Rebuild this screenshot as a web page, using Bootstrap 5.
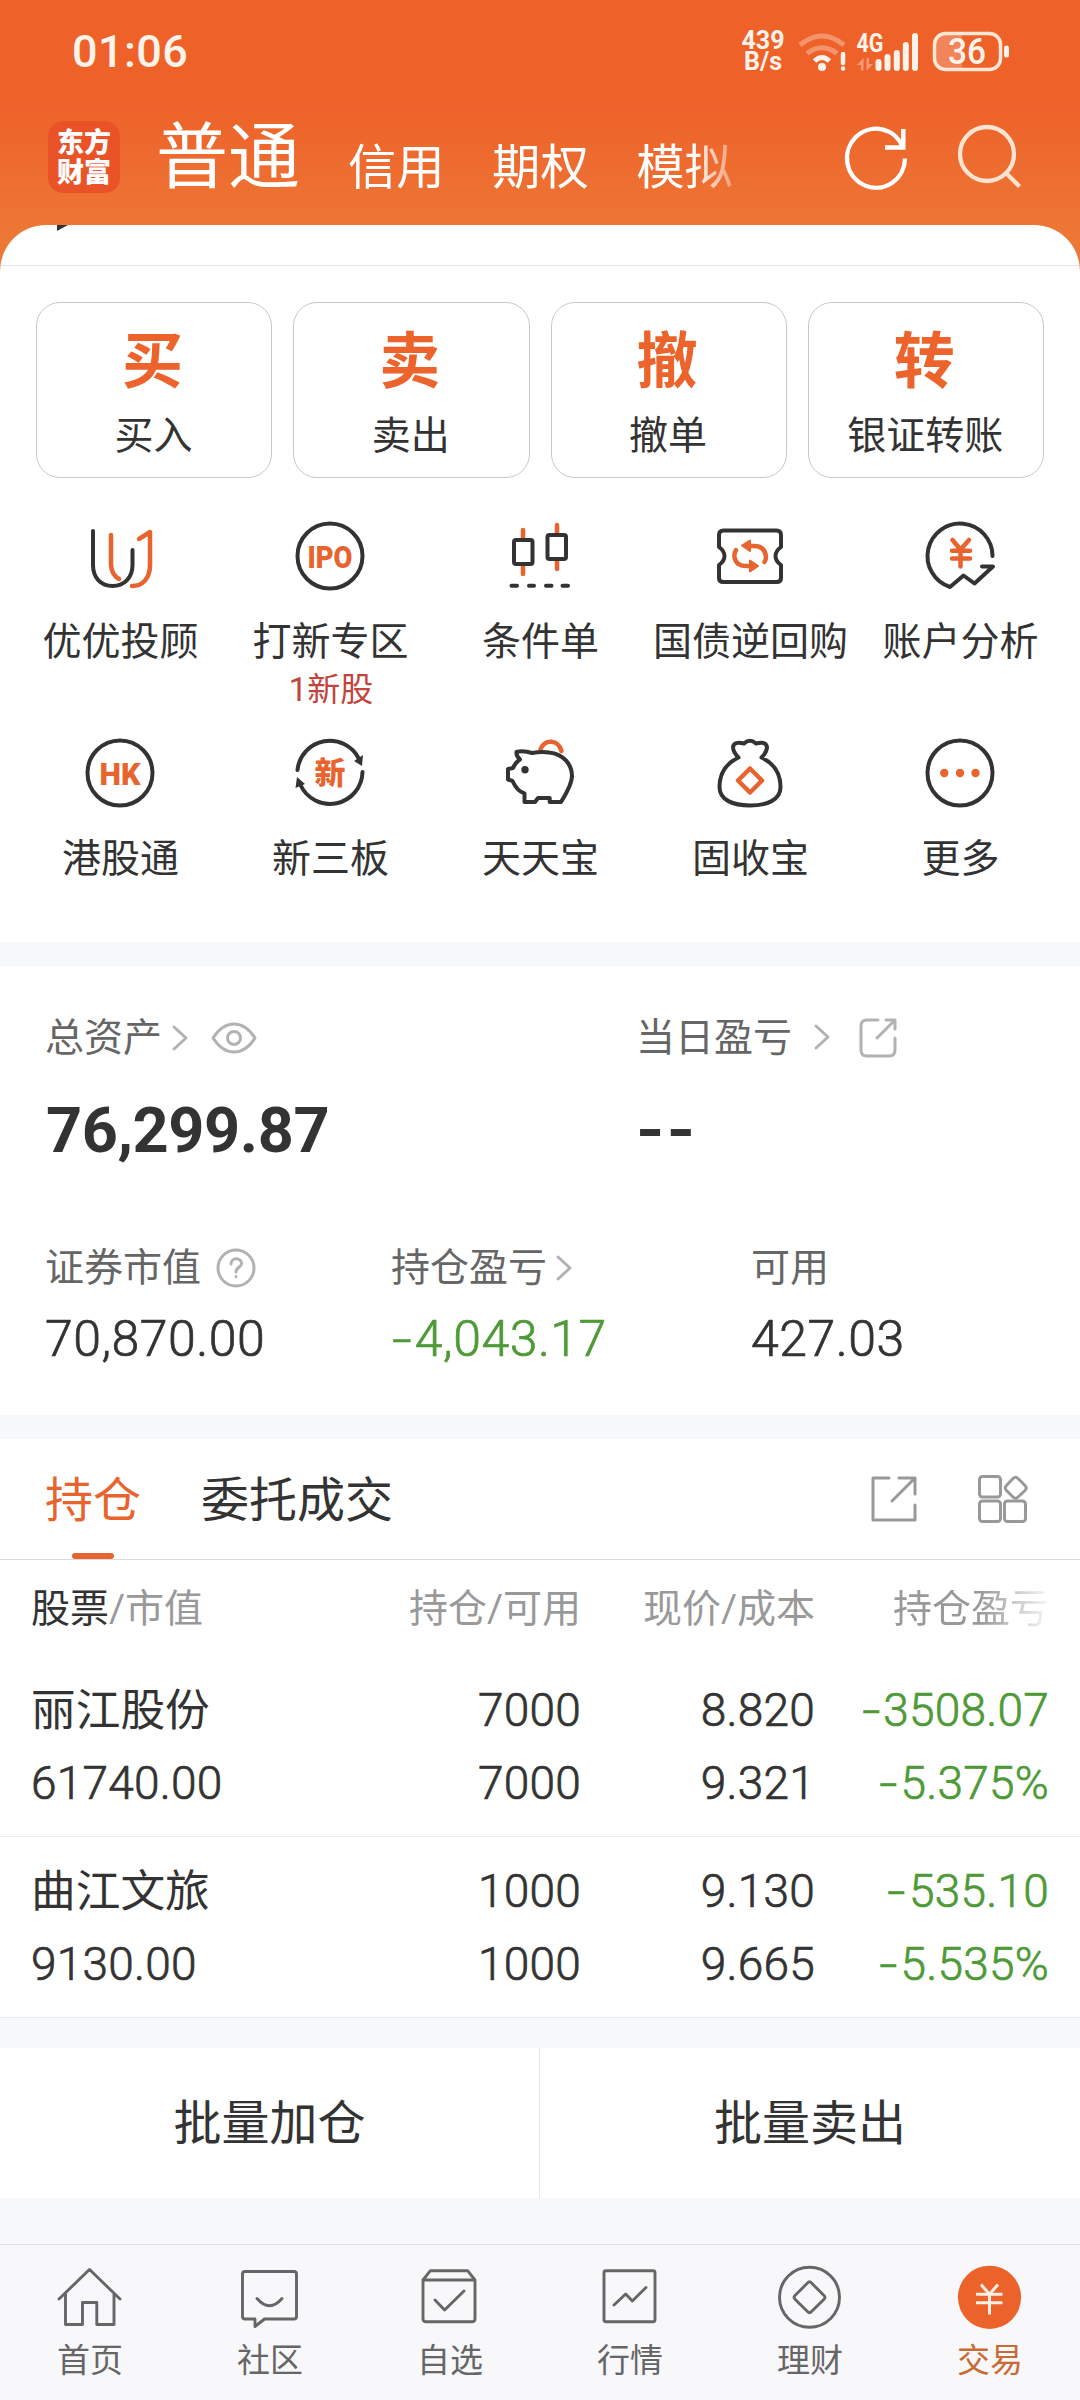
<!DOCTYPE html>
<html lang="zh-CN">
<head>
<meta charset="utf-8">
<meta name="viewport" content="width=device-width, initial-scale=1">
<title>交易</title>
<link href="https://cdn.jsdelivr.net/npm/bootstrap@5.3.0/dist/css/bootstrap.min.css" rel="stylesheet">
<style>
  :root { --org: #e8642e; --ink: #333; --sub: #666; --band: #f7f8fa; }
  body { width: 1080px; height: 2400px; margin: 0; overflow: hidden; background: #fff; color: var(--ink);
         font-family: Roboto, "Noto Sans CJK SC", sans-serif; font-size: 39px; line-height: 1; }
  svg { display: block; flex: none; fill: none; overflow: visible; stroke-linecap: round; stroke-linejoin: round; }
  svg text { stroke: none; }
  .top-area { height: 272px; background: linear-gradient(#ee622a 0, #ee622a 105px, #ed7735 235px); color: #fff; }
  .status { height: 103px; padding: 0 69px 0 72px; color: #fff3ea; }
  .clock { font-size: 45px; font-weight: 500; letter-spacing: .4px; }
  .speed { font-size: 25px; font-weight: 700; line-height: 20.5px; width: 46px; }
  .title-bar { height: 122px; padding-left: 48px; }
  .brand { width: 72px; height: 72px; border-radius: 15px; background: #ea5328; font: 900 27px/30px "Noto Sans CJK SC", sans-serif; padding-top: 5px; margin-top: 18px; }
  .now-tab { font-size: 72px; width: 192px; margin-left: 36px; padding-top: 19px; }
  .tabs-more { font-size: 48.3px; gap: 47.5px; width: 492px; padding-top: 9px;
     -webkit-mask-image: linear-gradient(90deg, #000 345px, transparent 405px); mask-image: linear-gradient(90deg, #000 345px, transparent 405px); }
  .sheet { margin-top: -47px; border-radius: 46px 46px 0 0; background: #fff; height: 717px; overflow: hidden; }
  .peek { height: 41px; border-bottom: 1px solid #e4e4e4; padding-left: 57px; }
  .quick { padding: 36px 36px 0; gap: 21px; }
  .quick > div { flex: 1 1 0; height: 176px; border: 1px solid #c9c9c9; border-radius: 24px; padding-right: 1px; }
  .quick b { font-size: 61px; font-weight: 700; color: #ec632b; height: 61px; margin: 29px 2px 0 0; }
  .quick span { margin-top: 24px; }
  .grid5 { padding: 0 15px; height: 217px; }
  .grid5 > div { flex: 1 1 0; white-space: nowrap; }
  .grid5 .cap-text { margin-top: 32px; padding-left: 1px; }
  .grid5 .hint { font-size: 33px; color: #c2443c; margin-top: 11px; padding-left: 2px; }
  .d { stroke: var(--ink); stroke-width: 4; }
  .o { stroke: var(--org); stroke-width: 4.5; }
  .of { fill: var(--org); }
  .strip { height: 24px; background: var(--band); }
  .assets { height: 449px; color: var(--sub); }
  .lbl { height: 40px; }
  .fig { color: var(--ink); font-weight: 300; font-size: 50px; -webkit-text-stroke: .7px; letter-spacing: .5px; margin-top: 26px; }
  .big { color: var(--ink); font-weight: 700; font-size: 63px; letter-spacing: -.4px; padding: 41px 0 0 1px; }
  .g { stroke: #b2b2b2; stroke-width: 3; }
  .green { color: #4f9a38; }
  .dash { display: inline-block; transform: scaleX(1.4); margin-right: 5px; margin-left: 4px; }
  .none2 { display: inline-block; transform: scaleX(1.15); transform-origin: 0 50%; letter-spacing: 2px; margin-left: -1px; }
  .seg { height: 121px; border-bottom: 1px solid #dcdcdc; font-size: 48px; padding: 0 52px 0 45px; }
  .seg span { padding-top: 4px; }
  .on { color: var(--org); position: relative; }
  .on::after { content: ""; position: absolute; left: 27px; bottom: -34px; width: 42px; height: 6px; border-radius: 3px; background: var(--org); }
  .h2l { stroke: #999; stroke-width: 3; }
  .cols { display: grid; grid-template-columns: 300px 250px 234px 234px; padding: 0 0 0 31px; text-align: right; white-space: nowrap; align-items: center; }
  .cols > :nth-child(4n+1) { text-align: left; }
  .heads { height: 98px; color: #999; }
  .fade-r { -webkit-mask-image: linear-gradient(90deg, #000 165px, transparent 240px); mask-image: linear-gradient(90deg, #000 165px, transparent 240px); }
  .hold { height: 179px; font-size: 46px; font-weight: 300; grid-template-rows: 73px 73px; align-content: start; padding-top: 15px; -webkit-text-stroke: .7px; letter-spacing: .25px; }
  .hold .nm { font-size: 44.7px; font-weight: 400; -webkit-text-stroke: 0; letter-spacing: 0; padding-top: 3px; }
  .rule { border-bottom: 1px solid #ececec; }
  .batch { background: var(--band); padding: 30px 0 46px; height: 226px; font-size: 48px; }
  .batch > div { height: 150px; background: #fff; padding-top: 2px; }
  .batch > div + div { border-left: 1px solid #e8e8ea; }
  .dock { height: 157px; border-top: 1px solid #dfe0e3; background: #f8f8fa; font-size: 33px; color: var(--sub); }
  .dock > div { flex: 1 1 0; padding-top: 20px; gap: 15px; }
  .k { stroke: #666; stroke-width: 2.9; }
</style>
<script src="https://cdn.jsdelivr.net/npm/bootstrap@5.3.0/dist/js/bootstrap.bundle.min.js"></script>
</head>
<body>
<header class="top-area">
  <div class="status d-flex justify-content-between align-items-center">
    <span class="clock">01:06</span>
    <div class="d-flex align-items-center">
      <div class="speed text-center">439<br>B/s</div>
      <svg width="225" height="40" viewBox="0 0 225 40">
        <g transform="translate(-786 -31)">
          <g stroke="#fff3ea" stroke-width="5" stroke-linecap="butt">
            <path d="M800 44Q822 26 844 44" opacity=".35"/>
            <path d="M807 52.500Q822 41 837 52.500" opacity=".35"/>
            <path d="M814.500 60Q822 53 829.500 60"/>
          </g>
          <circle cx="822" cy="66" r="4" fill="#fff3ea"/>
          <path d="M843 53V62M843 67.500V67.600" stroke="#fff3ea" stroke-width="4.500"/>
          <text x="856.500" y="50.500" font-size="25" font-weight="700" fill="#fff3ea" textLength="27" lengthAdjust="spacingAndGlyphs">4G</text>
          <path d="M857 64L863.500 57V69.500H861V64ZM873 63L866.500 69.500V57H869V63Z" fill="#f59a74"/>
          <path d="M878.500 61V67M887.500 56V67M896.800 52V67M905.800 44V67M915 35V67" stroke="#fff3ea" stroke-width="6"/>
          <path d="M962 33H947Q935 33 935 45V56Q935 68 947 68H962Z" fill="#fff" opacity=".22"/>
          <rect x="934.500" y="32.500" width="66" height="36" rx="11" stroke="#ffe7d8" stroke-width="3.500"/>
          <path d="M1006.500 47V54" stroke="#fff3ea" stroke-width="5"/>
          <text x="967" y="63" text-anchor="middle" font-size="36" font-weight="500" fill="#fff3ea" textLength="38" lengthAdjust="spacingAndGlyphs">36</text>
        </g>
      </svg>
    </div>
  </div>
  <div class="title-bar d-flex align-items-start">
    <div class="brand text-center">东方<br>财富</div>
    <div class="now-tab text-nowrap">普通</div>
    <div class="tabs-more d-flex text-nowrap align-self-center"><span>信用</span><span>期权</span><span>模拟</span></div>
    <svg width="200" height="80" viewBox="840 119 200 80" class="mt-3">
      <path d="M903 147.500A29 29.500 0 1 0 905 158.500" stroke="#fff" stroke-width="4.300" stroke-linecap="butt"/>
      <path d="M903.300 129V147.500H885" stroke="#fff" stroke-width="4.500" stroke-linecap="butt" stroke-linejoin="miter"/>
      <g stroke="#ffe4d2" stroke-width="4.300" stroke-linecap="butt"><ellipse cx="987" cy="154" rx="27" ry="27"/><path d="M1006 173L1019.500 186.500"/></g>
    </svg>
  </div>
</header>

<main>
<section class="sheet position-relative">
  <div class="peek"><svg width="12" height="7"><path d="M0 0H11L0 6Z" fill="#333"/></svg></div>
  <div class="quick d-flex">
    <div class="d-flex flex-column align-items-center"><b>买</b><span>买入</span></div>
    <div class="d-flex flex-column align-items-center"><b>卖</b><span>卖出</span></div>
    <div class="d-flex flex-column align-items-center"><b>撤</b><span>撤单</span></div>
    <div class="d-flex flex-column align-items-center"><b>转</b><span>银证转账</span></div>
  </div>
  <div class="grid5 d-flex" style="margin-top:43px">
    <div class="d-flex flex-column align-items-center">
      <svg width="70" height="70"><path class="d" d="M8 10V44C8 57 16 65 27.500 65S47.500 57 47.500 44V29"/><path class="o" d="M26 14V43C26 50 29 55 34 58M54 18L65 11V44C65 57 58 65 47 65"/></svg>
      <span class="cap-text">优优投顾</span>
    </div>
    <div class="d-flex flex-column align-items-center">
      <svg width="70" height="70"><circle class="d" cx="35" cy="35" r="32.500"/><text class="of" x="12.500" y="46.500" font-size="32" font-weight="900" textLength="45" lengthAdjust="spacingAndGlyphs">IPO</text></svg>
      <span class="cap-text">打新专区</span><span class="hint">1新股</span>
    </div>
    <div class="d-flex flex-column align-items-center">
      <svg width="70" height="70"><path class="o" d="M18 9V17M18 45V53M52 4V12M52 40V48"/><rect class="d" x="9" y="19" width="18.500" height="24" rx="2"/><rect class="d" x="42.500" y="14" width="18.500" height="24" rx="2"/><path class="d" d="M6.500 64.700H12M24 64.700H29M41 64.700H46.500M57.500 64.700H63"/></svg>
      <span class="cap-text">条件单</span>
    </div>
    <div class="d-flex flex-column align-items-center">
      <svg width="70" height="70"><path class="d" d="M4 14Q4 9.500 8.500 9.500H61.500Q66 9.500 66 14V26Q60.500 30 60.500 35T66 44V57Q66 61 61.500 61H8.500Q4 61 4 57V44Q9.500 40 9.500 35T4 26Z"/><path class="o" d="M36 25H39Q50 25 51 36Q51 39 49.500 41M21 29Q19 32 19.500 36Q21 45 31 45H34"/><path class="of" stroke="#e8642e" stroke-width="2" d="M27 24.500L35 19.500V30ZM43 45L35 39.500V50.500Z"/></svg>
      <span class="cap-text">国债逆回购</span>
    </div>
    <div class="d-flex flex-column align-items-center">
      <svg width="70" height="70"><path class="d" d="M67.500 35A32.500 32.500 0 1 0 25 66L38.500 54.500L49.500 62.500L68 45.500H57"/><path class="o" d="M27.500 19L35.500 28.500L44 19M35.500 28.500V45.500M27 29.800H45M27 37.500H45"/></svg>
      <span class="cap-text">账户分析</span>
    </div>
  </div>
  <div class="grid5 d-flex">
    <div class="d-flex flex-column align-items-center">
      <svg width="70" height="70"><circle class="d" cx="35" cy="35" r="32.500"/><text class="of" x="14.500" y="46.500" font-size="32" font-weight="900" textLength="41" lengthAdjust="spacingAndGlyphs">HK</text></svg>
      <span class="cap-text">港股通</span>
    </div>
    <div class="d-flex flex-column align-items-center">
      <svg width="70" height="70"><path class="d" d="M2.500 32A32.500 32.500 0 0 1 64 21M67.500 34A32.500 32.500 0 0 1 5.500 47"/><path fill="#333" d="M59 23L68 17L67 28ZM2 39L.5 50L10 46Z"/><text class="of" x="35" y="46" text-anchor="middle" font-size="31" font-weight="900">新</text></svg>
      <span class="cap-text">新三板</span>
    </div>
    <div class="d-flex flex-column align-items-center">
      <svg width="70" height="70"><path class="o" d="M35.500 11C40 1 53 1 56.500 13"/><path class="d" d="M11.500 14Q18 12 27 15Q36 13.500 44 14.500C59 16 67 27 67 38C67 46 61 56 56 64H44.700V60H33L30 64H19.500V55.500Q12 53 7.500 43L3 41.500V31L8 30Q10 25 15 21.500Q11 18 11.500 14Z"/><circle cx="20" cy="31.700" r="3.700" fill="#333"/></svg>
      <span class="cap-text">天天宝</span>
    </div>
    <div class="d-flex flex-column align-items-center">
      <svg width="70" height="70"><path class="d" d="M23.500 19.500Q18 14 18 9Q19 3 29 5.500Q35 0 41 5.500Q51 3 52 9Q52 14 46.500 19.500C58 25 65.500 35 65.500 49C65.500 62 52 67.500 35 67.500S4.500 62 4.500 49C4.500 35 12 25 23.500 19.500Z"/><path class="o" d="M35 30.500L47 42.500L35 54.500L23 42.500Z"/></svg>
      <span class="cap-text">固收宝</span>
    </div>
    <div class="d-flex flex-column align-items-center">
      <svg width="70" height="70"><circle class="d" cx="35" cy="35" r="32.500"/><g class="of"><circle cx="19.300" cy="35" r="4.200"/><circle cx="35" cy="35" r="4.200"/><circle cx="50.500" cy="35" r="4.200"/></g></svg>
      <span class="cap-text">更多</span>
    </div>
  </div>
</section>
<div class="strip"></div>

<section class="assets">
  <div class="d-flex" style="padding:52px 45px 0">
    <div style="width:591px">
      <div class="lbl d-flex align-items-center">总资产
        <svg width="16" height="26" style="margin-left:10px"><path class="g" d="M2 2L14 13L2 24"/></svg>
        <svg width="46" height="32" style="margin-left:23px"><path class="g" d="M2 16Q11 2 23 2T44 16Q35 30 23 30T2 16Z"/><circle class="g" cx="23" cy="16" r="6.500"/></svg>
      </div>
      <div class="big">76,299.87</div>
    </div>
    <div>
      <div class="lbl d-flex align-items-center">当日盈亏
        <svg width="16" height="26" style="margin-left:22px"><path class="g" d="M2 1L14 12L2 23"/></svg>
        <svg width="38" height="40" style="margin-left:29px"><path class="g" d="M19 2H8Q2 2 2 8V32Q2 38 8 38H30Q36 38 36 32V20M27 2H36V11M36 2L18 20"/></svg>
      </div>
      <div class="big"><span class="none2">--</span></div>
    </div>
  </div>
  <div class="d-flex" style="padding:86px 45px 0">
    <div style="width:346px"><div class="lbl d-flex align-items-center">证券市值
      <svg width="40" height="40" style="margin-left:15px"><circle class="g" cx="20" cy="20" r="18"/><path class="g" d="M15 16C15 9 25.500 9 25.500 15.500C25.500 19.500 20 19 20 24M20 28.500V28.800"/></svg></div>
      <div class="fig">70,870.00</div></div>
    <div style="width:360px"><div class="lbl d-flex align-items-center">持仓盈亏
      <svg width="16" height="26" style="margin-left:9px"><path class="g" d="M2 2L14 13L2 24"/></svg></div>
      <div class="fig green"><span class="dash">-</span>4,043.17</div></div>
    <div><div class="lbl d-flex align-items-center">可用</div>
      <div class="fig">427.03</div></div>
  </div>
</section>
<div class="strip"></div>

<section>
  <div class="seg d-flex align-items-center">
    <span class="on">持仓</span><span style="margin-left:60px">委托成交</span>
    <svg class="ms-auto" width="46" height="46"><path class="h2l" d="M18 2H2V44H44V29M28 2H44V18M44 2L21 25"/></svg>
    <svg width="50" height="48" style="margin-left:61px"><g class="h2l"><rect x="1.500" y="1.500" width="21" height="20.500" rx="3"/><rect x="1.500" y="26" width="21" height="20.500" rx="3"/><rect x="26.500" y="26" width="21" height="20.500" rx="3"/><path d="M35 3.500Q37.500 1 40 3.500L47 10.500Q49.500 13 47 15.500L40 22Q37.500 24.500 35 22L28.500 15.500Q26 13 28.500 10.500Z"/></g></svg>
  </div>
  <div class="cols heads"><span><span style="color:#333">股票</span>/市值</span><span>持仓/可用</span><span>现价/成本</span><span class="fade-r">持仓盈亏</span></div>
  <div class="cols hold rule">
    <span class="nm">丽江股份</span><span>7000</span><span>8.820</span><span class="green"><span class="dash">-</span>3508.07</span>
    <span>61740.00</span><span>7000</span><span>9.321</span><span class="green"><span class="dash">-</span>5.375%</span>
  </div>
  <div class="cols hold rule" style="height:181px;padding-top:17px">
    <span class="nm">曲江文旅</span><span>1000</span><span>9.130</span><span class="green"><span class="dash">-</span>535.10</span>
    <span>9130.00</span><span>1000</span><span>9.665</span><span class="green"><span class="dash">-</span>5.535%</span>
  </div>
  <div class="batch d-flex">
    <div class="d-flex justify-content-center align-items-center" style="width:539px">批量加仓</div>
    <div class="d-flex justify-content-center align-items-center flex-grow-1">批量卖出</div>
  </div>
</section>
</main>

<nav class="dock d-flex">
  <div class="d-flex flex-column align-items-center"><svg width="64" height="64"><path class="k" d="M1 34L31.500 4.500L62 34M7.500 29V59.500H24.500V37.500H38.800V59.500H56V29"/></svg>首页</div>
  <div class="d-flex flex-column align-items-center"><svg width="64" height="64"><path class="k" d="M7 6.500H56Q58.500 6.500 58.500 9V51.500Q58.500 54 56 54H26.500L17 61.500V54H7Q4.500 54 4.500 51.500V9Q4.500 6.500 7 6.500ZM19 33.500Q31.500 48 44 33.500"/></svg>社区</div>
  <div class="d-flex flex-column align-items-center"><svg width="64" height="64"><path class="k" d="M5 15V54Q5 56.700 8 56.700H54Q57 56.700 57 54V15L49.600 5.700H12.400L5 15H57M17 35L26.600 45L46 26"/></svg>自选</div>
  <div class="d-flex flex-column align-items-center"><svg width="64" height="64"><rect class="k" x="6" y="5.700" width="51" height="51" rx="2"/><path class="k" d="M16 40L27.700 29L34.300 36L48 22.500"/></svg>行情</div>
  <div class="d-flex flex-column align-items-center"><svg width="64" height="64"><circle class="k" cx="31.500" cy="32.300" r="30"/><path class="k" d="M29.500 18Q31.500 15.500 33.500 18L46 30.500Q48 32.300 46 34.300L33.500 46.500Q31.500 49 29.500 46.500L17 34.300Q15 32.300 17 30.500Z"/></svg>理财</div>
  <div class="d-flex flex-column align-items-center" style="color:#c96a35"><svg width="64" height="64"><circle cx="31.500" cy="32.300" r="31.600" fill="#ec622b"/><path stroke="#fff0e4" stroke-width="3" stroke-linecap="butt" d="M23 19.500L31.500 29.300L40 19.500M31.500 29.300V49.500M18 29.300H44.500M18 37.700H44.500"/></svg>交易</div>
</nav>
</body>
</html>
